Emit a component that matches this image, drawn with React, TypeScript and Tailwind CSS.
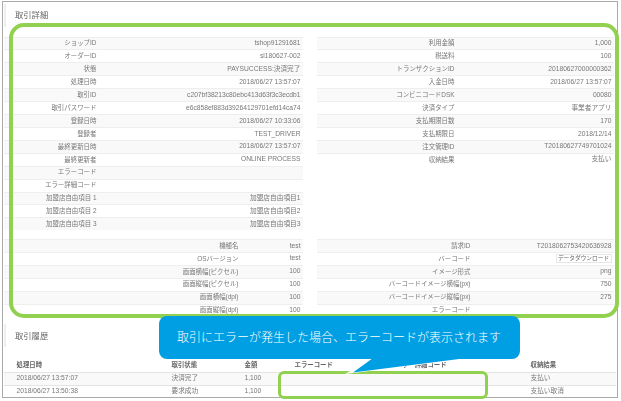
import React from "react";

type Row = [string, React.ReactNode];

const topLeft: Row[] = [
  ["ショップID", "tshop91291681"],
  ["オーダーID", "sl180627-002"],
  ["状態", "PAYSUCCESS:決済完了"],
  ["処理日時", "2018/06/27 13:57:07"],
  ["取引ID", "c207bf38213c80ebc413d63f3c3ecdb1"],
  ["取引パスワード", "e6c858ef883d39264129701efd14ca74"],
  ["登録日時", "2018/06/27 10:33:06"],
  ["登録者", "TEST_DRIVER"],
  ["最終更新日時", "2018/06/27 13:57:07"],
  ["最終更新者", "ONLINE PROCESS"],
  ["エラーコード", ""],
  ["エラー詳細コード", ""],
  ["加盟店自由項目 1", "加盟店自由項目1"],
  ["加盟店自由項目 2", "加盟店自由項目2"],
  ["加盟店自由項目 3", "加盟店自由項目3"],
];

const topRight: Row[] = [
  ["利用金額", "1,000"],
  ["税送料", "100"],
  ["トランザクションID", "20180627000000362"],
  ["入金日時", "2018/06/27 13:57:07"],
  ["コンビニコードDSK", "00080"],
  ["決済タイプ", "事業者アプリ"],
  ["支払期限日数", "170"],
  ["支払期限日", "2018/12/14"],
  ["注文管理ID", "T20180627749701024"],
  ["収納結果", "支払い"],
];

const lowerLeft: Row[] = [
  ["機種名", "test"],
  ["OSバージョン", "test"],
  ["画面横幅(ピクセル)", "100"],
  ["画面縦幅(ピクセル)", "100"],
  ["画面横幅(dpi)", "100"],
  ["画面縦幅(dpi)", "100"],
];

const lowerRight: Row[] = [
  ["請求ID", "T2018062753420636928"],
  [
    "バーコード",
    <span className="inline-flex h-[9px] w-[56px] items-center justify-center border border-[#e6e6e6] bg-white text-[5.7px] text-[#666666]">
      データダウンロード
    </span>,
  ],
  ["イメージ形式", "png"],
  ["バーコードイメージ横幅(px)", "750"],
  ["バーコードイメージ縦幅(px)", "275"],
  ["エラーコード", ""],
];

const history = [
  ["2018/06/27 13:57:07", "決済完了", "1,100", "", "", "支払い"],
  ["2018/06/27 13:50:38", "要求成功", "1,100", "", "", "支払い取消"],
];

function DetailTable({ rows, labelClass }: { rows: Row[]; labelClass: string }) {
  return (
    <div>
      {rows.map(([label, value], i) => (
        <div
          key={i}
          className={`flex h-[12.93px] items-center border-t border-[#eeeeee] pr-[2px] ${
            i % 2 === 0 ? "bg-[#f9f9f9]" : "bg-white"
          }`}
        >
          <div className={`${labelClass} shrink-0 whitespace-nowrap text-right text-[6.45px]`}>{label}</div>
          <div className="flex-1 whitespace-nowrap text-right">{value}</div>
        </div>
      ))}
    </div>
  );
}

function SectionTitle({ text }: { text: string }) {
  return (
    <div className="ml-[1px] flex h-[23px] items-center border-l-[2px] border-[#eeeeee] pl-[9px] text-[8.3px] text-[#666666]">
      {text}
    </div>
  );
}

export default function App() {
  return (
    <div
      className="relative h-[401px] w-[621px] overflow-hidden bg-white text-[6.7px] leading-none text-[#777777]"
      style={{ fontFamily: '"Liberation Sans", "Noto Sans CJK JP", sans-serif' }}
    >
      <div className="ml-[2px] mt-[1px] h-[397px] w-[616px] overflow-hidden border-[1.5px] border-[#aaaaaa] blur-[0.4px]">
        <div className="pt-[2px]">
          <SectionTitle text="取引詳細" />
        </div>
        <div className="ml-[0.5px] mt-[9.5px] grid w-[610px] grid-cols-[299px_297px] gap-x-[14px]">
          <DetailTable rows={topLeft} labelClass="w-[93px]" />
          <DetailTable rows={topRight} labelClass="w-[138px]" />
        </div>
        <div className="ml-[0.5px] mt-[8.6px] grid w-[610px] grid-cols-[299px_297px] gap-x-[14px]">
          <DetailTable rows={lowerLeft} labelClass="w-[235px]" />
          <DetailTable rows={lowerRight} labelClass="w-[154px]" />
        </div>
        <div className="mt-[7.9px]">
          <SectionTitle text="取引履歴" />
        </div>
        <div className="ml-[0.5px] mt-[10.5px] w-[612px]">
          <div className="grid h-[14px] grid-cols-[155px_73px_50px_101px_135px_1fr] items-center pl-[13px] text-[6.4px] font-bold text-[#666666]">
            <div>処理日時</div>
            <div>取引状態</div>
            <div>金額</div>
            <div>エラーコード</div>
            <div>エラー詳細コード</div>
            <div>収納結果</div>
          </div>
          {history.map((row, i) => (
            <div
              key={i}
              className={`grid h-[13px] grid-cols-[155px_73px_50px_101px_135px_1fr] items-center border-t border-[#e4e4e4] pl-[13px] ${
                i === 0 ? "bg-[#f9f9f9]" : "bg-white"
              }`}
            >
              {row.map((cell, j) => (
                <div key={j}>{cell}</div>
              ))}
            </div>
          ))}
        </div>
      </div>

      {/* Callout overlays */}
      <div className="absolute left-[9px] top-[23px] h-[295px] w-[610px] rounded-[15px] border-[4px] border-[#92d050]" />
      <div className="absolute left-[278px] top-[371px] h-[27.5px] w-[210px] rounded-[6px] border-[3.5px] border-[#92d050]" />
      <svg className="absolute left-[340px] top-[355px]" width="140" height="22" viewBox="0 0 140 22">
        <polygon points="5,19 33,3 135,3" fill="#ffffff" />
        <polygon points="13,17.5 33,3 127,3" fill="#009fe3" />
      </svg>
      <div className="absolute left-[159px] top-[316px] flex h-[43px] w-[361px] items-center rounded-[8px] bg-[#009fe3] pl-[18px] text-[12px] font-light whitespace-nowrap text-white">
        取引にエラーが発生した場合、エラーコードが表示されます
      </div>
    </div>
  );
}
